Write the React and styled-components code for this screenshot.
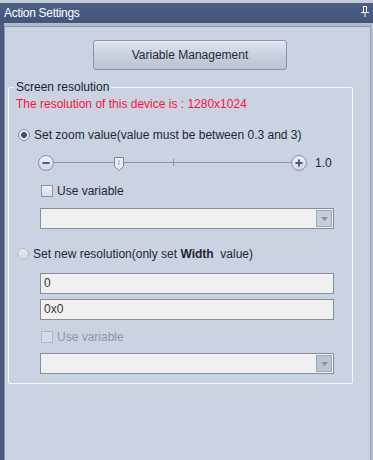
import React from 'react';
import styled, { createGlobalStyle } from 'styled-components';

const GlobalStyle = createGlobalStyle`
  html, body {
    margin: 0;
    padding: 0;
    background: #c9d3e1;
  }
  body {
    font-family: "Liberation Sans", Arial, sans-serif;
    font-size: 12px;
    color: #1f2636;
  }
`;

function PinIcon() {
  return (
    <svg width="8" height="11" viewBox="0 0 8 11">
      <path d="M0 6.5h8M2 0.5h4M2.5 1v5M5.5 1v5M4 7v4" stroke="#fff" strokeWidth="1" fill="none" />
      <rect x="2" y="1" width="1" height="5" fill="#fff" />
    </svg>
  );
}

function Thumb() {
  return (
    <svg width="10" height="14" viewBox="0 0 10 14">
      <path d="M0.5 0.5h9v9l-4.5 4-4.5-4z" fill="#e9edf3" stroke="#7c8699" />
      <path d="M5 3v5" stroke="#9aa3b3" />
    </svg>
  );
}

function Dropdown({ disabled }) {
  return (
    <Combo>
      <ArrowButton $disabled={disabled}>
        <svg width="7" height="4" viewBox="0 0 7 4">
          <path d="M0 0h7L3.5 4z" fill="#8a909b" />
        </svg>
      </ArrowButton>
    </Combo>
  );
}

export default function App() {
  return (
    <>
      <GlobalStyle />
      <Window>
        <TopEdge />
        <TitleBar>
          <span>Action Settings</span>
          <PinIcon />
        </TitleBar>
        <Body>
          <Content>
            <MainButton>Variable Management</MainButton>
            <Group>
              <Legend>Screen resolution</Legend>
              <Notice>The resolution of this device is : 1280x1024</Notice>

              <OptionRow $top={16} $indent={2}>
                <Radio $checked />
                <span>Set zoom value(value must be between 0.3 and 3)</span>
              </OptionRow>

              <SliderRow>
                <RoundButton>
                  <svg width="16" height="16" viewBox="0 0 16 16">
                    <path d="M4.5 8h7" stroke="#555d6c" strokeWidth="2" />
                  </svg>
                </RoundButton>
                <Track>
                  <Tick />
                  <ThumbHolder style={{ left: 60 }}>
                    <Thumb />
                  </ThumbHolder>
                </Track>
                <RoundButton>
                  <svg width="16" height="16" viewBox="0 0 16 16">
                    <path d="M4.5 8h7M8 4.5v7" stroke="#555d6c" strokeWidth="2" />
                  </svg>
                </RoundButton>
                <SliderValue>1.0</SliderValue>
              </SliderRow>

              <CheckRow $top={13}>
                <CheckBox />
                <span>Use variable</span>
              </CheckRow>
              <FieldSlot $top={10}>
                <Dropdown />
              </FieldSlot>

              <OptionRow $top={18} $indent={1}>
                <Radio />
                <span>
                  Set new resolution(only set <b>Width</b>&nbsp; value)
                </span>
              </OptionRow>

              <FieldSlot $top={12}>
                <TextBox>0</TextBox>
              </FieldSlot>
              <FieldSlot $top={5}>
                <TextBox>0x0</TextBox>
              </FieldSlot>

              <CheckRow $top={10} $disabled>
                <CheckBox $disabled />
                <span>Use variable</span>
              </CheckRow>
              <FieldSlot $top={9}>
                <Dropdown disabled />
              </FieldSlot>
            </Group>
          </Content>
        </Body>
      </Window>
    </>
  );
}

const Window = styled.div`
  width: 373px;
  height: 460px;
  display: flex;
  flex-direction: column;
  overflow: hidden;
  background: #c9d3e1;
`;

const TopEdge = styled.div`
  height: 3px;
  background: #c4ccd8;
`;

const TitleBar = styled.div`
  height: 20px;
  display: flex;
  align-items: center;
  justify-content: space-between;
  padding: 0 4px 0 4px;
  background: linear-gradient(#4b5f87, #42567b);
  color: #fff;
  font-size: 12px;
  letter-spacing: -0.3px;

  svg {
    margin-bottom: 3px;
  }
`;

const Body = styled.div`
  flex: 1;
  display: flex;
  border-left: 4px solid #4a5b7f;
  padding-top: 3px;
  background: #b4bdcc;
`;

const Content = styled.div`
  flex: 1;
  display: flex;
  flex-direction: column;
  align-items: flex-start;
  margin-right: 2px;
  padding-top: 13px;
  background: #c9d3e1;
  border-top: 1px solid #8c96a8;
  border-left: 1px solid #8c96a8;
  border-right: 1px solid #9aa3b3;
`;

const MainButton = styled.button`
  width: 194px;
  height: 30px;
  margin-left: 88px;
  padding: 0;
  font-family: inherit;
  font-size: 12px;
  color: #222a3a;
  border: 1px solid #8a94a9;
  border-radius: 3px;
  background: linear-gradient(#dfe5ee, #c7d0de 55%, #b8c2d2);
  box-shadow: inset 0 1px 0 #eef1f6;
`;

const Group = styled.fieldset`
  box-sizing: border-box;
  width: 345px;
  margin: 11px 0 0 3px;
  padding: 2px 0 9px 7px;
  border: 1px solid #f6f8fb;
  border-radius: 2px;
  min-width: 0;
  display: flex;
  flex-direction: column;
  align-items: flex-start;
`;

const Legend = styled.legend`
  margin-left: -2px;
  padding: 0 2px;
  line-height: 13px;
  font-size: 12px;
  color: #1a2030;
`;

const Notice = styled.div`
  line-height: 16px;
  color: #ff1040;
`;

const OptionRow = styled.label`
  display: flex;
  align-items: center;
  gap: 4px;
  height: 14px;
  margin-top: ${(p) => p.$top}px;
  margin-left: ${(p) => p.$indent}px;
  line-height: 14px;
  color: #1f2636;

  b {
    font-weight: bold;
  }
`;

const Radio = styled.span`
  box-sizing: border-box;
  width: 12px;
  height: 12px;
  border-radius: 50%;
  border: 1px solid ${(p) => (p.$checked ? '#8a93a5' : '#b2bac8')};
  background: ${(p) =>
    p.$checked
      ? 'radial-gradient(circle, #3d4f72 0 2.6px, #e2e7ee 3.2px)'
      : 'linear-gradient(#e8ebf0, #d3d9e2)'};
`;

const SliderRow = styled.div`
  display: flex;
  align-items: center;
  height: 16px;
  margin: 13px 0 0 22px;
`;

const RoundButton = styled.span`
  box-sizing: border-box;
  width: 16px;
  height: 16px;
  border-radius: 50%;
  border: 1px solid #8892a4;
  background: linear-gradient(#eef1f5, #cfd6e1);
  display: flex;

  svg {
    margin: -1px;
  }
`;

const Track = styled.div`
  position: relative;
  width: 237px;
  height: 16px;

  &::before {
    content: '';
    position: absolute;
    left: 0;
    right: 0;
    top: 7px;
    height: 1px;
    background: #8a93a5;
  }
`;

const Tick = styled.span`
  position: absolute;
  left: 119px;
  top: 4px;
  width: 1px;
  height: 7px;
  background: #8a93a5;
`;

const ThumbHolder = styled.span`
  position: absolute;
  top: 2px;
  display: flex;
`;

const SliderValue = styled.span`
  margin-left: 8px;
  line-height: 14px;
`;

const CheckRow = styled.label`
  display: flex;
  align-items: center;
  gap: 4px;
  height: 14px;
  margin: ${(p) => p.$top}px 0 0 25px;
  color: ${(p) => (p.$disabled ? '#8e97a7' : '#1f2636')};
`;

const CheckBox = styled.span`
  box-sizing: border-box;
  width: 12px;
  height: 12px;
  border: 1px solid ${(p) => (p.$disabled ? '#aeb6c4' : '#8a93a5')};
  background: ${(p) =>
    p.$disabled ? '#d6dce5' : 'linear-gradient(#eef1f5, #d6dce5)'};
`;

const FieldSlot = styled.div`
  margin: ${(p) => p.$top}px 0 0 24px;
`;

const Combo = styled.div`
  box-sizing: border-box;
  width: 294px;
  height: 21px;
  border: 1px solid #858ea1;
  background: #f0f0f0;
  display: flex;
  justify-content: flex-end;
  padding: 1px;
`;

const ArrowButton = styled.span`
  box-sizing: border-box;
  width: 16px;
  height: 17px;
  display: flex;
  align-items: center;
  justify-content: center;
  border: 1px solid #9ea8b9;
  background: ${(p) => (p.$disabled ? '#b9c4d4' : '#c5cedc')};
`;

const TextBox = styled.div`
  box-sizing: border-box;
  width: 294px;
  height: 21px;
  border: 1px solid #858ea1;
  background: #f0f0f0;
  padding: 0 3px;
  line-height: 19px;
  color: #3b3630;
`;
